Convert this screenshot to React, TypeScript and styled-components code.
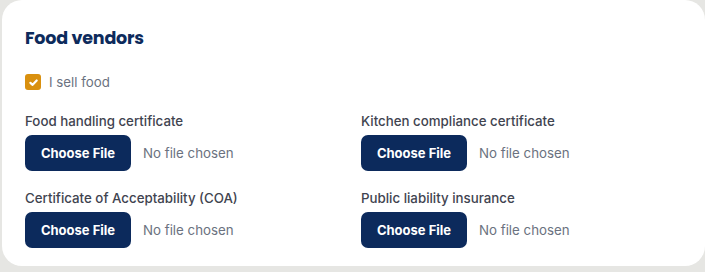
import styled, { createGlobalStyle } from 'styled-components';

const GlobalStyle = createGlobalStyle`
    html, body {
        margin: 0;
        padding: 0;
        background: #e6e6e3;
    }
    body {
        font-family: Inter, "Noto Sans", sans-serif;
    }
`

const Page = styled.div`
    width: 705px;
    height: 272px;
    padding: 0 0 6px 2px;
    box-sizing: border-box;
    display: flex;
`

const Card = styled.section`
    flex: 1;
    background: #ffffff;
    border-radius: 20px;
    padding: 26px 23px 0 23px;
    box-sizing: border-box;
`

const Title = styled.h2`
    margin: 0;
    font-family: Poppins, Inter, sans-serif;
    font-size: 17.5px;
    font-weight: 700;
    letter-spacing: -0.2px;
    color: #0d2b5c;
    line-height: 24px;
`

const CheckRow = styled.label`
    display: flex;
    align-items: center;
    gap: 8px;
    margin-top: 24px;
    font-size: 13.3px;
    color: #6b7280;
`

const Box = styled.span`
    width: 16px;
    height: 16px;
    border-radius: 3px;
    background: #d9900f;
    display: flex;
    align-items: center;
    justify-content: center;
`

const Grid = styled.div`
    display: grid;
    grid-template-columns: 336px 1fr;
    row-gap: 18px;
    margin-top: 22px;
`

const Field = styled.div`
    display: flex;
    flex-direction: column;
    gap: 5px;
`

const Label = styled.span`
    font-size: 13.3px;
    font-weight: 500;
    color: #3f4450;
    line-height: 18px;
`

const FileRow = styled.div`
    display: flex;
    align-items: center;
    gap: 12px;
`

const ChooseButton = styled.button`
    width: 106px;
    height: 36px;
    border: none;
    border-radius: 7px;
    background: #0c2a5c;
    color: #ffffff;
    font-family: Inter, sans-serif;
    font-size: 13px;
    font-weight: 700;
    cursor: pointer;
`

const NoFile = styled.span`
    font-size: 13.3px;
    color: #6b7280;
`

const fields = [
    'Food handling certificate',
    'Kitchen compliance certificate',
    'Certificate of Acceptability (COA)',
    'Public liability insurance',
];

export default function App() {
    return (
        <Page>
            <GlobalStyle />
            <Card>
                <Title>Food vendors</Title>
                <CheckRow>
                    <Box>
                        <svg width="11" height="11" viewBox="0 0 10 10">
                            <path d="M2.2 5.3 L4.2 7.1 L7.9 3.2" fill="none" stroke="#fff" strokeWidth="2" strokeLinecap="round" strokeLinejoin="round" />
                        </svg>
                    </Box>
                    I sell food
                </CheckRow>
                <Grid>
                    {fields.map((f) => (
                        <Field key={f}>
                            <Label>{f}</Label>
                            <FileRow>
                                <ChooseButton>Choose File</ChooseButton>
                                <NoFile>No file chosen</NoFile>
                            </FileRow>
                        </Field>
                    ))}
                </Grid>
            </Card>
        </Page>
    )
}
